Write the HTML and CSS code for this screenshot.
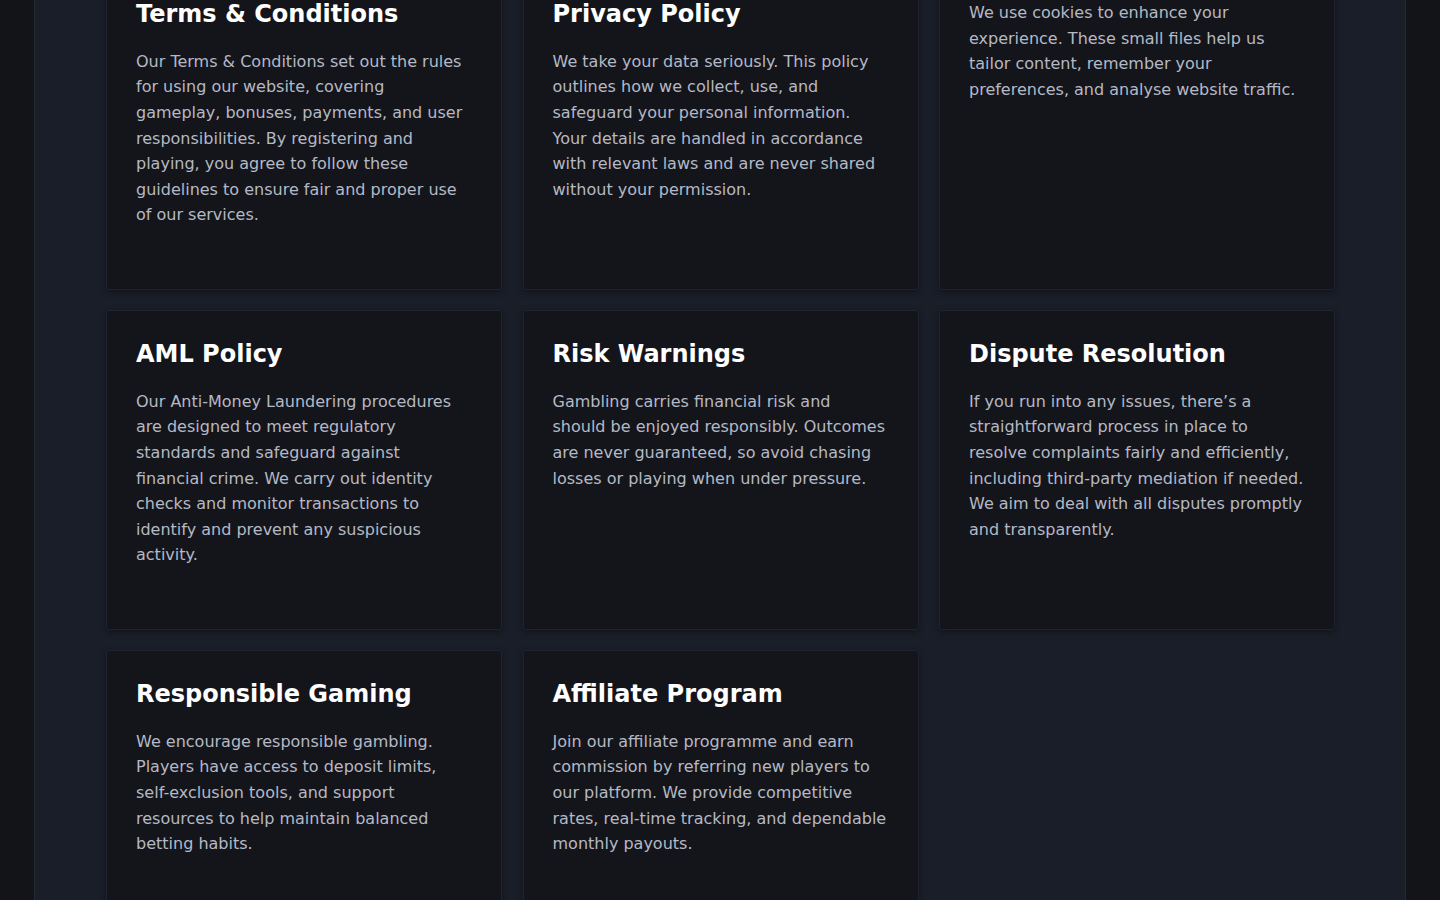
FILE: index.html
```html
<!DOCTYPE html>
<html lang="en">
<head>
  <meta charset="UTF-8">
  <title>Legal Information</title>
  <link rel="stylesheet" href="styles.css">
</head>
<body>

  <div id="page">
    <div class="cards">
      <div class="card">
        <h2>Terms &amp; Conditions</h2>
        <p>Our Terms &amp; Conditions set out the rules for using our website, covering gameplay, bonuses, payments, and user responsibilities. By registering and playing, you agree to follow these guidelines to ensure fair and proper use of our services.</p>
      </div>
      <div class="card">
        <h2>Privacy Policy</h2>
        <p>We take your data seriously. This policy outlines how we collect, use, and safeguard your personal information. Your details are handled in accordance with relevant laws and are never shared without your permission.</p>
      </div>
      <div class="card">
        <p>We use cookies to enhance your experience. These small files help us tailor content, remember your preferences, and analyse website traffic.</p>
      </div>
      <div class="card">
        <h2>AML Policy</h2>
        <p>Our Anti-Money Laundering procedures are designed to meet regulatory standards and safeguard against financial crime. We carry out identity checks and monitor transactions to identify and prevent any suspicious activity.</p>
      </div>
      <div class="card">
        <h2>Risk Warnings</h2>
        <p>Gambling carries financial risk and should be enjoyed responsibly. Outcomes are never guaranteed, so avoid chasing losses or playing when under pressure.</p>
      </div>
      <div class="card">
        <h2>Dispute Resolution</h2>
        <p>If you run into any issues, there’s a straightforward process in place to resolve complaints fairly and efficiently, including third-party mediation if needed. We aim to deal with all disputes promptly and transparently.</p>
      </div>
      <div class="card">
        <h2>Responsible Gaming</h2>
        <p>We encourage responsible gambling. Players have access to deposit limits, self-exclusion tools, and support resources to help maintain balanced betting habits.</p>
      </div>
      <div class="card">
        <h2>Affiliate Program</h2>
        <p>Join our affiliate programme and earn commission by referring new players to our platform. We provide competitive rates, real-time tracking, and dependable monthly payouts.</p>
      </div>
    </div>
  </div>

</body>
</html>
```

FILE: styles.css
```css
body {
  font-family: "DejaVu Sans", Verdana, sans-serif;
  background-color: #131418;
  margin: 0;
  padding: 0;
  overflow: hidden;
}

#page {
  margin: 0 34px;
  min-height: 900px;
  padding: 0 70px 40px 71px;
  background-color: #1a1e29;
  border-left: 1px solid #242936;
  border-right: 1px solid #242936;
}

.cards {
  display: grid;
  grid-template-columns: repeat(3, 1fr);
  gap: 20px 20.5px;
  margin-top: -30px;
}

.card {
  background-color: #14151b;
  border: 1px solid #1f2330;
  border-radius: 3px;
  box-shadow: 0 2px 6px rgba(0, 0, 0, 0.35);
  padding: 29px 29px 61px;
  min-height: 320px;
  box-sizing: border-box;
}

.card h2 {
  margin: 0 0 20px;
  font-size: 24px;
  line-height: 1.2;
  font-weight: bold;
  color: #ffffff;
}

.card p {
  margin: 0;
  font-size: 16px;
  line-height: 1.6;
  color: #b5b9c5;
}
```
